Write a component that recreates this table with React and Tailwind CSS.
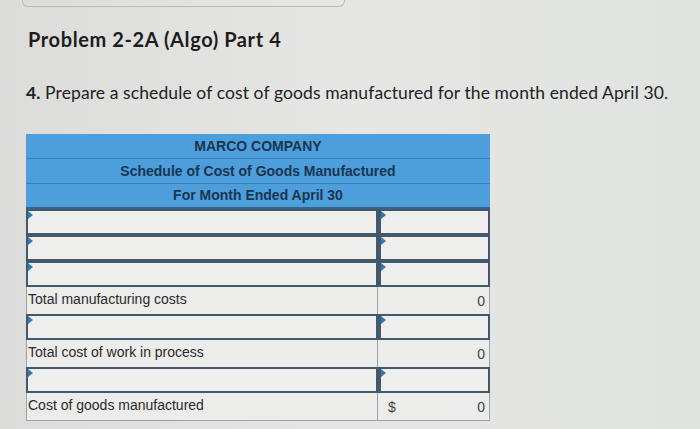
function InputRow() {
  return (
    <div className="flex h-[26px] bg-[#eeeeec]">
      <div className="relative flex-1 border-2 border-[#44586b]">
        <span className="absolute left-0 top-0 h-0 w-0 border-y-[4px] border-l-[5px] border-y-transparent border-l-[#2f79b8]" />
      </div>
      <div className="relative w-[112px] border-2 border-l-[3px] border-[#44586b]">
        <span className="absolute left-0 top-0 h-0 w-0 border-y-[4px] border-l-[5px] border-y-transparent border-l-[#2f79b8]" />
      </div>
    </div>
  );
}

function LabelRow({ label, dollar }) {
  return (
    <div className="flex h-[27px] bg-[#ececea] border-x border-[#9aa3ab] text-[14px] text-[#2a2a2a]" style={{ fontFamily: '"Liberation Sans", Arial, sans-serif' }}>
      <div className="flex flex-1 items-center px-[1px] pb-[2px]">{label}</div>
      <div className="flex w-[112px] items-end justify-between border-l border-[#9aa3ab] pl-[10px] pr-[4px] pb-[2px] text-[14px] text-[#444]">
        <span>{dollar ? "$" : ""}</span>
        <span>0</span>
      </div>
    </div>
  );
}

export default function App() {
  return (
    <div className="h-[429px] w-[700px] overflow-hidden bg-gradient-to-r from-[#dcdcda] via-[#e6e7e5] to-[#e1e3e1]">
      <div className="ml-[22px] h-[7px] w-[323px] rounded-b-[6px] border-x border-b border-[#b9bbba]" />
      <h1 className="ml-[28px] mt-[20px] text-[20px] font-bold leading-[24px] tracking-[0.6px] text-[#1d1d1d]" style={{ fontFamily: 'Lato, "Open Sans", sans-serif' }}>
        Problem 2-2A (Algo) Part 4
      </h1>
      <p className="ml-[26px] mt-[31px] text-[17.5px] leading-[22px] tracking-[0.1px] text-[#222]" style={{ fontFamily: 'Lato, "Open Sans", sans-serif' }}>
        <span className="font-bold">4.</span> Prepare a schedule of cost of goods manufactured for the month ended April 30.
      </p>
      <div className="ml-[26px] mt-[30px] w-[464px]">
        <div className="bg-[#4c9fdb] text-[14px] font-bold text-[#1b3452]" style={{ fontFamily: '"Liberation Sans", Arial, sans-serif' }}>
          <div className="flex h-[25px] items-center justify-center border-b border-[#3a80b8]">MARCO COMPANY</div>
          <div className="flex h-[25px] items-center justify-center border-b border-[#3a80b8]">Schedule of Cost of Goods Manufactured</div>
          <div className="flex h-[25px] items-center justify-center border-b-2 border-[#36648c]">For Month Ended April 30</div>
        </div>
        <InputRow />
        <InputRow />
        <InputRow />
        <LabelRow label="Total manufacturing costs" />
        <InputRow />
        <LabelRow label="Total cost of work in process" />
        <InputRow />
        <div className="border-b border-[#9aa3ab]">
          <LabelRow label="Cost of goods manufactured" dollar />
        </div>
      </div>
    </div>
  );
}
